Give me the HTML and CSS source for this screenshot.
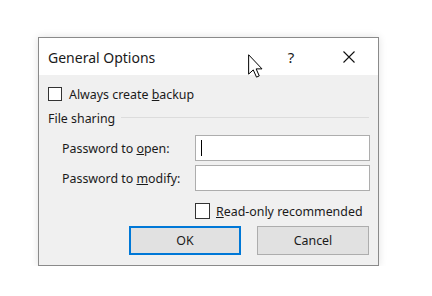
FILE: index.html
```html
<!DOCTYPE html>
<html lang="en">
<head>
	<meta charset="UTF-8">
	<title>General Options</title>
	<link rel="stylesheet" href="styles.css">
</head>
<body>
	<section class="dialog">

		<div class="titlebar">
			<span class="title">General Options</span>
			<span class="help">?</span>
			<span class="close">
				<svg width="12" height="12" viewBox="0 0 12 12"><path d="M0.5 0.5 L11.5 11.5 M11.5 0.5 L0.5 11.5" stroke="#111" stroke-width="1.1" fill="none"/></svg>
			</span>
		</div>

		<div class="content">
			<label class="check backup"><span class="box"></span><span>Always create <u>b</u>ackup</span></label>

			<div class="group">
				<span>File sharing</span>
				<span class="rule"></span>
			</div>

			<div class="fields">
				<div class="field">
					<label>Password to <u>o</u>pen:</label>
					<div class="input"><span class="caret"></span></div>
				</div>
				<div class="field">
					<label>Password to <u>m</u>odify:</label>
					<div class="input"></div>
				</div>
			</div>

			<label class="check readonly"><span class="box"></span><span><u>R</u>ead-only recommended</span></label>

			<div class="buttons">
				<button class="ok">OK</button>
				<button>Cancel</button>
			</div>
		</div>

	</section>

	<svg class="pointer" width="15" height="24" viewBox="0 0 12 19">
		<path d="M0.5 0.5 L0.5 16 L4.2 12.6 L6.8 18.4 L9 17.4 L6.5 11.8 L11.2 11.8 Z" fill="#fff" stroke="#000" stroke-width="0.8" stroke-linejoin="miter"/>
	</svg>
</body>
</html>
```

FILE: styles.css
```css
* {
	box-sizing: border-box;
}

body {
	margin: 0;
	background: #fff;
	font-family: "Noto Sans", "Open Sans", sans-serif;
	color: #1a1a1a;
}

.dialog {
	width: 341px;
	height: 229px;
	margin: 37px 0 0 38px;
	border: 1px solid #8a8a8a;
	background: #f0f0f0;
	box-shadow: 0 0 8px rgba(0, 0, 0, .12);
	display: flex;
	flex-direction: column;
}

.titlebar {
	height: 37px;
	background: #fff;
	display: flex;
	align-items: center;
	padding-left: 9px;
}

.title {
	font-size: 14px;
	flex: 1;
	padding-top: 2px;
}

.help {
	font-size: 15px;
	width: 20px;
	text-align: center;
	margin-right: 42px;
}

.close {
	display: flex;
	margin-right: 23px;
}

.content {
	flex: 1;
	padding: 12px 8px 0 9px;
	font-size: 12.4px;
}

.check {
	display: flex;
	align-items: center;
	gap: 7px;
	height: 14px;
}

.box {
	width: 14px;
	height: 14px;
	border: 1px solid #333;
	background: #fff;
}

.group {
	display: flex;
	align-items: center;
	gap: 6px;
	height: 16px;
	margin-top: 9px;
}

.rule {
	flex: 1;
	height: 1px;
	background: #dcdcdc;
	margin-right: 1px;
	margin-top: -1px;
}

.fields {
	margin-top: 9px;
	padding-left: 14px;
	display: flex;
	flex-direction: column;
	gap: 4px;
}

.field {
	display: flex;
	align-items: center;
}

.field label {
	width: 133px;
}

.input {
	flex: 1;
	height: 26px;
	border: 1px solid #adadad;
	background: #fff;
	display: flex;
	align-items: center;
	padding-left: 5px;
}

.caret {
	width: 1px;
	height: 16px;
	background: #000;
}

.readonly {
	margin-top: 12px;
	margin-left: 147px;
	height: 16px;
	gap: 6px;
}

.readonly .box {
	width: 15px;
	height: 16px;
}

.buttons {
	display: flex;
	justify-content: flex-end;
	gap: 16px;
	margin-top: 7px;
	padding-right: 1px;
}

button {
	width: 112px;
	height: 29px;
	border: 1px solid #adadad;
	background: #e1e1e1;
	font-family: inherit;
	font-size: 12.4px;
	color: #1a1a1a;
}

.ok {
	border: 2px solid #0078d7;
}

.pointer {
	position: absolute;
	left: 248px;
	top: 54px;
}
```
